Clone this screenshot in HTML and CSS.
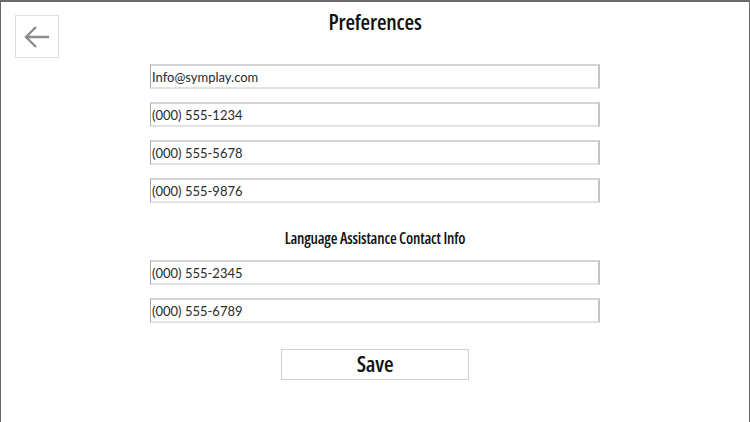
FILE: index.html
```html
<!DOCTYPE html>
<html lang="en">
<head>
  <meta charset="UTF-8" />
  <meta name="viewport" content="width=device-width, initial-scale=1.0"/>
  <title>Preferences</title>
  <link rel="stylesheet" href="styles.css">
</head>
<body>
  <div class="screen">
    <header class="top-bar">
      <button class="back-btn" aria-label="Back">
        <svg width="26" height="24" viewBox="0 0 26 24">
          <path d="M25 12H2M12 2L2 12l10 10" fill="none" stroke="#8c8c8c" stroke-width="2.4"/>
        </svg>
      </button>
      <h1>Preferences</h1>
    </header>

    <form class="prefs">
      <input class="field" type="text" value="Info@symplay.com">
      <input class="field" type="text" value="(000) 555-1234">
      <input class="field" type="text" value="(000) 555-5678">
      <input class="field" type="text" value="(000) 555-9876">

      <h2>Language Assistance Contact Info</h2>

      <input class="field" type="text" value="(000) 555-2345">
      <input class="field" type="text" value="(000) 555-6789">

      <button class="save-btn" type="button">Save</button>
    </form>
  </div>
</body>
</html>
```

FILE: styles.css
```css
html, body {
  margin: 0;
  height: 100%;
  background: #fff;
}

body {
  font-family: Lato, "Open Sans", sans-serif;
  color: #222;
}

.screen {
  box-sizing: border-box;
  height: 100%;
  border: 1px solid #6a6a6a;
  border-top-width: 2px;
  border-bottom: none;
  overflow: hidden;
}

.top-bar {
  position: relative;
  height: 62px;
}

.back-btn {
  position: absolute;
  top: 13px;
  left: 14px;
  width: 44px;
  height: 43px;
  padding: 0;
  background: #fff;
  border: 1px solid #dedede;
  display: flex;
  align-items: center;
  justify-content: center;
  cursor: pointer;
}

/* condensed bold headings, close to the original's Avenir Condensed */
h1, h2, .save-btn {
  font-family: "Open Sans", Roboto, sans-serif;
  font-stretch: 75%;
  font-weight: 600;
  color: #111;
}

h1 {
  margin: 0;
  padding-top: 5px;
  text-align: center;
  font-size: 22px;
  line-height: 28px;
  letter-spacing: -0.2px;
}

.prefs {
  display: flex;
  flex-direction: column;
  align-items: center;
}

.field {
  box-sizing: border-box;
  width: 450px;
  height: 25px;
  margin-bottom: 13px;
  padding: 0 2px 0 1px;
  font-family: Lato, "Open Sans", sans-serif;
  font-size: 13px;
  color: #2a2a2a;
  border: 2px solid #e2e2e2;
  border-left: 1px solid #a8a8a8;
  border-right: 2px solid #c4c4c4;
  border-top-color: #d4d4d4;
  outline: none;
}

h2 {
  margin: 12px 0 12px;
  font-size: 15.5px;
  line-height: 20px;
  letter-spacing: -0.2px;
}

.save-btn {
  box-sizing: border-box;
  width: 188px;
  height: 31px;
  margin-top: 13px;
  padding: 0 0 3px;
  background: #fff;
  border: 1px solid #d0d0d0;
  font-size: 22px;
  line-height: 26px;
  letter-spacing: -0.2px;
  cursor: pointer;
}
```
